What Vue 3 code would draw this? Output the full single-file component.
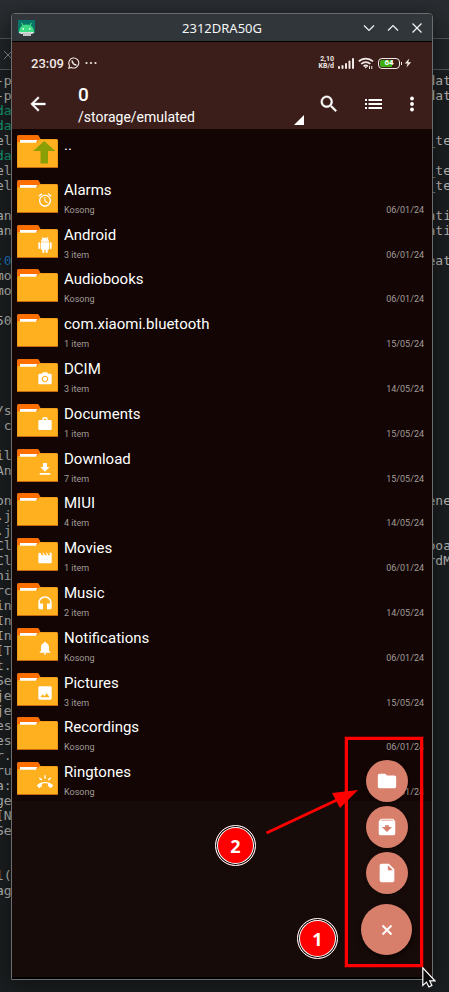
<script setup>
const badges = {
  alarm: 'M22 5.72l-4.6-3.86-1.29 1.53 4.6 3.86L22 5.72zM7.88 3.39L6.6 1.86 2 5.71l1.29 1.53 4.59-3.85zM12.5 8H11v6l4.75 2.85.75-1.23-4-2.37V8zM12 4c-4.97 0-9 4.03-9 9s4.02 9 9 9c4.97 0 9-4.03 9-9s-4.03-9-9-9zm0 16c-3.87 0-7-3.13-7-7s3.13-7 7-7 7 3.13 7 7-3.13 7-7 7z',
  android: 'M6 18c0 .55.45 1 1 1h1v3.5c0 .83.67 1.5 1.5 1.5s1.5-.67 1.5-1.5V19h2v3.5c0 .83.67 1.5 1.5 1.5s1.5-.67 1.5-1.5V19h1c.55 0 1-.45 1-1V8H6v10zM3.5 8C2.67 8 2 8.67 2 9.5v7c0 .83.67 1.5 1.5 1.5S5 17.33 5 16.5v-7C5 8.67 4.33 8 3.5 8zm17 0c-.83 0-1.5.67-1.5 1.5v7c0 .83.67 1.5 1.5 1.5s1.5-.67 1.5-1.5v-7c0-.83-.67-1.5-1.5-1.5zm-4.97-5.84l1.3-1.3c.2-.2.2-.51 0-.71-.2-.2-.51-.2-.71 0l-1.48 1.48C13.85 1.23 12.95 1 12 1c-.96 0-1.86.23-2.66.63L7.85.15c-.2-.2-.51-.2-.71 0-.2.2-.2.51 0 .71l1.31 1.31C6.97 3.26 6 5.01 6 7h12c0-1.99-.97-3.75-2.47-4.84zM10 5H9V4h1v1zm5 0h-1V4h1v1z',
  camera: 'M9 2L7.17 4H4c-1.1 0-2 .9-2 2v12c0 1.1.9 2 2 2h16c1.1 0 2-.9 2-2V6c0-1.1-.9-2-2-2h-3.17L15 2H9zm3 15c-2.76 0-5-2.24-5-5s2.24-5 5-5 5 2.24 5 5-2.24 5-5 5zM12 8.8a3.2 3.2 0 1 0 0 6.4a3.2 3.2 0 1 0 0-6.4z',
  work: 'M20 6h-4V4c0-1.11-.89-2-2-2h-4c-1.11 0-2 .89-2 2v2H4c-1.11 0-1.99.89-1.99 2L2 19c0 1.11.89 2 2 2h16c1.11 0 2-.89 2-2V8c0-1.11-.89-2-2-2zm-6 0h-4V4h4v2z',
  download: 'M19 9h-4V3H9v6H5l7 7 7-7zM4 18v2.500h16v-2.500H4z',
  movie: 'M18 4l2 4h-3l-2-4h-2l2 4h-3l-2-4H8l2 4H7L5 4H4c-1.1 0-1.99.9-1.99 2L2 18c0 1.1.9 2 2 2h16c1.1 0 2-.9 2-2V4h-4z',
  headset: 'M12 2c-5.500 0-10 4.300-10 9.600v7.400c0 1.300 1 2.300 2.300 2.300H9v-8.500H4.300v-1c0-4.100 3.400-7.500 7.700-7.500s7.700 3.400 7.700 7.500v1H15v8.500h4.700c1.300 0 2.300-1 2.300-2.300v-7.400C22 6.300 17.500 2 12 2z',
  bell: 'M12 22c1.100 0 2-.9 2-2h-4c0 1.100.89 2 2 2zm6-6v-5c0-3.070-1.640-5.640-4.500-6.320V4c0-.83-.67-1.500-1.500-1.500s-1.500.67-1.500 1.500v.68C7.630 5.360 6 7.920 6 11v5l-2 2v1h16v-1l-2-2z',
  image: 'M22 20V4c0-1.100-.9-2-2-2H4c-1.100 0-2 .9-2 2v16c0 1.100.9 2 2 2h16c1.100 0 2-.9 2-2zM8.500 14l2.500 3.010L14.500 12.500l4.500 6H5l3.500-4.500z',
  ring: 'M23.71 16.67C20.66 13.78 16.54 12 12 12 7.46 12 3.34 13.78.29 16.67c-.18.18-.29.43-.29.71 0 .28.11.53.29.71l2.48 2.48c.18.18.43.29.71.29.27 0 .52-.11.7-.28.79-.74 1.69-1.36 2.66-1.85.33-.16.56-.5.56-.9v-3.1c1.45-.48 3-.73 4.6-.73 1.6 0 3.15.25 4.6.72v3.1c0 .39.23.74.56.9.98.49 1.87 1.12 2.67 1.85.18.18.43.28.7.28.28 0 .53-.11.71-.29l2.48-2.48c.18-.18.29-.43.29-.71 0-.28-.12-.52-.3-.7zM21.16 6.26l-1.41-1.41-3.56 3.55 1.41 1.41s3.45-3.52 3.56-3.55zM13 2h-2v5h2V2zM6.4 9.81L7.81 8.4 4.26 4.84 2.84 6.26c.11.03 3.56 3.55 3.56 3.55z',
}

const folders = [
  { name: '..', up: true },
  { name: 'Alarms', info: 'Kosong', date: '06/01/24', badge: 'alarm' },
  { name: 'Android', info: '3 item', date: '06/01/24', badge: 'android' },
  { name: 'Audiobooks', info: 'Kosong', date: '06/01/24' },
  { name: 'com.xiaomi.bluetooth', info: '1 item', date: '15/05/24' },
  { name: 'DCIM', info: '3 item', date: '14/05/24', badge: 'camera' },
  { name: 'Documents', info: '1 item', date: '15/05/24', badge: 'work' },
  { name: 'Download', info: '7 item', date: '15/05/24', badge: 'download' },
  { name: 'MIUI', info: '4 item', date: '14/05/24' },
  { name: 'Movies', info: '1 item', date: '06/01/24', badge: 'movie' },
  { name: 'Music', info: '2 item', date: '14/05/24', badge: 'headset' },
  { name: 'Notifications', info: 'Kosong', date: '06/01/24', badge: 'bell' },
  { name: 'Pictures', info: '3 item', date: '15/05/24', badge: 'image' },
  { name: 'Recordings', info: 'Kosong', date: '06/01/24' },
  { name: 'Ringtones', info: 'Kosong', date: '06/01/24', badge: 'ring' },
]

const left = [
  '-p', '-p', 'da', 'da', 'el', 'da', 'el', 'el', '', 'an', 'an', '', ':0', 'mo', 'mo', '', '50',
  '', '', '', '', '', '/s', ' c', '', 'il', 'An', '', 'on', '.j', '.j', 'Cl', 'Cl', 'ni', 'rc',
  'in', 'In', 'In', '[T', 't.', 'Se', 'je', 'je', 'es', 'es', 'r.', 'ru', 'a:', 'ge', '[N', 'Se',
  '', '', 'l(', 'ag',
]
const right = {
  0: 'dat', 1: 'dat', 4: '_te', 6: '_te', 7: '_te', 9: 'ati', 10: 'ati', 12: 'eat',
  28: 'ene', 31: 'boa', 32: 'rdM',
}
const tone = (t) => (t === 'da' ? 'green' : t === ':0' ? 'blue' : '')
</script>

<template>
  <div class="desktop">
    <div class="terminal">
      <div class="term-title"></div>
      <div class="term-tabs">
        <svg width="12" height="12" viewBox="0 0 12 12"><path d="M3 2l8 8M11 2l-8 8" stroke="#85898b" fill="none" /></svg>
      </div>
      <div class="term-lines">
        <div v-for="(t, i) in left" :key="i" class="term-line">
          <span :class="tone(t)">{{ t }}</span><span>{{ right[i] }}</span>
        </div>
      </div>
    </div>

    <main class="window">
      <header class="titlebar">
        <svg class="app-icon" width="17" height="16" viewBox="0 0 17 16">
          <rect width="17" height="13" fill="#087568" />
          <path d="M1 12h15v1l-2 1H3l-2-1z" fill="#d5dbd8" />
          <path d="M5 13h8v3H5z" fill="#c5c5c5" />
          <path d="M1 12c0-4.500 3-7.500 7.500-7.500S16 7.500 16 12z" fill="#3ddc84" />
          <path d="M3.500 3l2 3M13.500 3l-2 3" stroke="#3ddc84" stroke-width="1.200" />
          <circle cx="5.200" cy="8.800" r=".9" fill="#fff" /><circle cx="11.800" cy="8.800" r=".9" fill="#fff" />
        </svg>
        <h1>2312DRA50G</h1>
        <div class="win-buttons">
          <button aria-label="Minimize"><svg width="12" height="12" viewBox="0 0 12 12"><path d="M1 3.500l5 5 5-5" /></svg></button>
          <button aria-label="Maximize"><svg width="12" height="12" viewBox="0 0 12 12"><path d="M1 8.500l5-5 5 5" /></svg></button>
          <button aria-label="Close"><svg width="12" height="12" viewBox="0 0 12 12"><path d="M1.500 1.500l9 9M10.500 1.500l-9 9" /></svg></button>
        </div>
      </header>

      <section class="phone">
        <div class="status">
          <span class="clock">23:09</span>
          <svg width="12" height="12" viewBox="0 0 12 12" fill="none" stroke="#f2e9e6">
            <path d="M.8 11.200l.7-2.700A5 5 0 1 1 3.500 10.400z" stroke-width="1.100" />
            <path d="M4.300 3.600c-.6 2 2.200 4.900 4.200 4.200" stroke-width="1.600" />
          </svg>
          <svg class="dots" width="12" height="4" viewBox="0 0 12 4" fill="#f2e9e6"><circle cx="1.500" cy="2" r="1.100" /><circle cx="6" cy="2" r="1.100" /><circle cx="10.500" cy="2" r="1.100" /></svg>
          <span class="speed"><span>2,10</span><span>KB/d</span></span>
          <svg class="signal" width="17" height="11" viewBox="0 0 17 11" fill="#f2e9e6">
            <rect x="0" y="8" width="2" height="3" rx="1" /><rect x="3.500" y="7" width="2" height="4" rx="1" /><rect x="7" y="5" width="2" height="6" rx="1" /><rect x="10.500" y="2.500" width="2" height="8.500" rx="1" /><rect x="14" y="0" width="2" height="11" rx="1" />
          </svg>
          <svg class="wifi" width="16" height="12" viewBox="0 0 16 12" fill="none" stroke="#f2e9e6" stroke-width="1.700">
            <path d="M.8 4.400C4.600.6 11 .6 15 4.400" /><path d="M3.200 7c2.600-2.500 6.600-2.500 9.200 0" /><path d="M5.600 9.300c1.300-1.200 3-1.200 4.400 0" />
            <path d="M6.300 9.500h3l-1.500 2z" fill="#f2e9e6" stroke="none" /><path d="M11.500 9v3M13.800 9v3" stroke-width="1" />
          </svg>
          <span class="battery"><span>64</span></span>
          <svg class="bolt" width="8" height="10" viewBox="0 0 8 10"><path d="M5.200.5L.8 5.600h2.800L2.400 9.500 7.200 4.300H4.300z" fill="#f2e9e6" /></svg>
        </div>
        <nav class="toolbar">
          <button class="back" aria-label="Back"><svg width="22" height="22" viewBox="0 0 24 24"><path d="M20 11H7.830l5.590-5.590L12 4l-8 8 8 8 1.410-1.410L7.830 13H20v-2z" fill="#fff" stroke="#fff" stroke-width=".5" /></svg></button>
          <div class="path"><strong>0</strong><span>/storage/emulated</span></div>
          <svg class="corner" width="10" height="10" viewBox="0 0 10 10"><path d="M10 0v10H0z" fill="#fff" /></svg>
          <button class="tool" aria-label="Search"><svg width="22" height="22" viewBox="0 0 24 24"><path d="M15.500 14h-.79l-.28-.27A6.470 6.470 0 0 0 16 9.500 6.500 6.500 0 1 0 9.500 16c1.610 0 3.090-.59 4.230-1.570l.27.28v.79l5 4.990L20.490 19l-4.990-5zm-6 0C7.010 14 5 11.990 5 9.500S7.010 5 9.500 5 14 7.010 14 9.500 11.990 14 9.500 14z" fill="#fff" stroke="#fff" stroke-width=".4" /></svg></button>
          <button class="tool" aria-label="View"><svg width="17" height="12" viewBox="0 0 17 12" fill="#fff"><path d="M0 1h2v2H0zM0 5h2v2H0zM0 9h2v2H0zM3.500 1H17v2H3.500zM3.500 5H17v2H3.500zM3.500 9H17v2H3.500z" /></svg></button>
          <button class="more" aria-label="More"><svg width="4" height="16" viewBox="0 0 4 16" fill="#fff"><circle cx="2" cy="2.500" r="1.900" /><circle cx="2" cy="8" r="1.900" /><circle cx="2" cy="13.500" r="1.900" /></svg></button>
        </nav>

        <ul class="list">
          <li v-for="f in folders" :key="f.name">
            <svg class="folder" width="41" height="33" viewBox="0 0 41 33">
              <path d="M0 1.500Q0 0 1.500 0H20q1.500 0 2 1.200L23.500 4H39.500Q41 4 41 5.500V33H0z" fill="#c66a10" />
              <path d="M.3 2Q.3.300 2 .3H20q1.400 0 1.900 1.200L23.300 4.300 22 8H.3z" fill="#ff6f00" />
              <path d="M.3 8.500Q.3 7 1.800 7H19q1.500 0 2.300-1.200L22.500 4.300H39.300q1.400 0 1.400 1.400V32H.3z" fill="#ffb01f" />
              <path d="M3 5H20.500L18.800 7.700H3z" fill="#fff" />
              <path v-if="f.up" d="M27.200 6l11 10h-7.200v12.500h-7.500V16h-7.300z" fill="#8a9e06" />
              <svg v-if="f.badge" x="20" y="12" width="16" height="16" viewBox="0 0 24 24"><path :d="badges[f.badge]" fill="#fff" /></svg>
            </svg>
            <div class="info">
              <span class="name">{{ f.name }}</span>
              <div v-if="f.info" class="meta"><span>{{ f.info }}</span><time>{{ f.date }}</time></div>
            </div>
          </li>
        </ul>
      </section>

      <div class="fabs">
        <button class="fab" aria-label="New folder"><svg width="22" height="22" viewBox="0 0 24 24"><path d="M10 4H4c-1.100 0-1.990.9-1.990 2L2 18c0 1.100.9 2 2 2h16c1.100 0 2-.9 2-2V8c0-1.100-.9-2-2-2h-8l-2-2z" fill="#fff" /></svg></button>
        <button class="fab" aria-label="New archive"><svg width="22" height="22" viewBox="0 0 24 24"><path d="M20.540 5.230l-1.390-1.680C18.880 3.210 18.470 3 18 3H6c-.47 0-.88.21-1.160.55L3.460 5.230C3.170 5.570 3 6.020 3 6.500V19c0 1.100.9 2 2 2h14c1.100 0 2-.9 2-2V6.500c0-.48-.17-.93-.46-1.270zM12 17.500L6.500 12H10v-2h4v2h3.500L12 17.500zM5.120 5l.81-1h12l.94 1H5.120z" fill="#fff" /></svg></button>
        <button class="fab" aria-label="New file"><svg width="22" height="22" viewBox="0 0 24 24"><path d="M6 2c-1.100 0-1.990.9-1.990 2L4 20c0 1.100.89 2 1.990 2H18c1.100 0 2-.9 2-2V8l-6-6H6zm7 7V3.500L18.500 9H13z" fill="#fff" /></svg></button>
        <button class="fab main" aria-label="Close menu"><svg width="12" height="12" viewBox="0 0 12 12"><path d="M1.500 1.500l9 9M10.500 1.500l-9 9" stroke="#fff" stroke-width="2" fill="none" /></svg></button>
      </div>
      <div class="frame"></div>
      <svg class="arrow" width="94" height="48" viewBox="0 0 94 48"><path d="M1.500 45L74 11" stroke="#f00" stroke-width="3" /><path d="M93 2L67 5l8 15z" fill="#f00" /></svg>
      <span class="step two">2</span>
      <span class="step one">1</span>
      <svg class="cursor" width="14" height="21" viewBox="0 0 14 21"><path d="M.8.8v17.600l3.700-3.300 2.400 4.800 3-1.400-2.200-4.700h5.200z" fill="#0a0a0a" stroke="#fff" stroke-width="1.200" /></svg>
    </main>
  </div>
</template>

<style>
body { background: #1b1e20; }
</style>

<style scoped>
* { box-sizing: border-box; }
button { border: 0; padding: 0; background: none; display: flex; align-items: center; justify-content: center; }
svg { display: block; flex: none; }
.desktop { display: grid; grid-template-columns: minmax(0, 1fr); min-height: 100vh; overflow: hidden; font-family: Roboto, sans-serif; }
.terminal, .window { grid-area: 1 / 1; }
.terminal { background: #1b1e20; overflow: hidden; }
.term-title { height: 38px; background: linear-gradient(#2a2e32, #25292c); }
.term-tabs { height: 32px; padding: 10px 0 0 1px; background: #202426; border-top: 1px solid #54585b; border-bottom: 1px solid #54585b; }
.term-lines { padding-top: 3px; margin: 0 -2px 0 -4px; font: 13px/15px "DejaVu Sans Mono", monospace; color: #b4b5b2; white-space: pre; }
.term-line { display: flex; justify-content: space-between; height: 15px; }
.green { color: #129a70; }
.blue { color: #1b76bd; }

.window { position: relative; display: flex; flex-direction: column; margin: 13px 16px 12px 11px; border: 1px solid #6a6e70; border-radius: 4px 4px 0 0; background: #000; box-shadow: 0 4px 20px 2px rgba(0, 0, 0, .4); }
.titlebar { display: grid; grid-template-columns: 72px 1fr 72px; align-items: center; height: 27px; padding: 0 6px; background: #31363b; border-radius: 3px 3px 0 0; }
h1 { margin: 0; font: 13px/20px "Noto Sans", sans-serif; color: #f4f5f5; text-align: center; }
.win-buttons { display: flex; gap: 12px; justify-content: flex-end; padding-right: 3px; }
.win-buttons path { stroke: #f4f5f5; stroke-width: 1.2; fill: none; }

.phone { flex: 1; margin: 1px 0 2px; background: #170b09; }
.status { display: flex; align-items: center; height: 42px; padding: 0 20px 0 19px; background: #3b1e19; color: #f2e9e6; }
.clock { font-size: 13px; font-weight: 500; margin-right: 4px; }
.dots { margin-left: 5px; }
.speed { display: flex; flex-direction: column; margin-left: auto; font-size: 7px; line-height: 7px; font-weight: 700; text-align: right; }
.signal { margin-left: 4px; }
.wifi { margin-left: 3px; }
.battery { position: relative; display: flex; align-items: center; justify-content: center; width: 22px; height: 11px; margin-left: 4px; border: 1px solid #f2e9e6; border-radius: 4px; background: linear-gradient(90deg, #3fae12 64%, transparent 64%) content-box; padding: 1px; font: 700 8px/8px Roboto, sans-serif; color: #fff; }
.battery::after { content: ""; position: absolute; right: -3px; top: 3px; width: 1px; height: 3px; background: #f2e9e6; }
.bolt { margin-left: 4px; }
.toolbar { display: flex; height: 45px; padding-right: 4px; background: #3b1e19; color: #fff; }
.toolbar button { height: 40px; }
.back { width: 51px; }
.path { display: flex; flex-direction: column; flex: 1; padding-left: 15px; font-size: 14px; line-height: 22px; white-space: nowrap; }
.path strong { font-size: 19px; font-weight: 500; }
.corner { align-self: flex-end; margin: 0 3px 4px 0; }
.tool { width: 44px; }
.more { width: 33px; }

.list { display: grid; grid-auto-rows: 1fr; min-height: 672px; margin: 0; padding: 0; list-style: none; background: #120503; }
li { display: flex; gap: 6px; padding: 6px 8px 0 5px; }
.info { flex: 1; display: flex; flex-direction: column; gap: 4px; }
.name { font-size: 15px; line-height: 20px; color: #fff; }
.meta { display: flex; justify-content: space-between; font-size: 9px; line-height: 12px; color: #a39c9a; }

.fabs { position: absolute; right: 20px; bottom: 24px; display: flex; flex-direction: column; align-items: center; gap: 4px; }
.fab { width: 42px; height: 42px; border-radius: 50%; background: #d87f6c; box-shadow: 0 1px 3px rgba(0, 0, 0, .5); }
.main { width: 51px; height: 51px; margin-top: 6px; box-shadow: 1px 3px 6px rgba(0, 0, 0, .6); }
.frame { position: absolute; right: 9px; bottom: 12px; width: 78px; height: 230px; border: 3px solid #f00; box-shadow: 0 0 0 1px rgba(120, 0, 0, .6); pointer-events: none; }
.arrow { position: absolute; right: 73px; bottom: 143px; }
.step { position: absolute; display: flex; align-items: center; justify-content: center; width: 41px; height: 41px; border-radius: 50%; border: 1px solid #fff; background: #f00; box-shadow: inset 0 0 0 1px #000, inset 0 0 0 2px #fff; font: 700 18px/20px "Open Sans", sans-serif; color: #fff; }
.two { right: 176px; bottom: 113px; }
.one { right: 94px; bottom: 20px; }
.cursor { position: absolute; right: -4px; bottom: -9px; }
</style>
